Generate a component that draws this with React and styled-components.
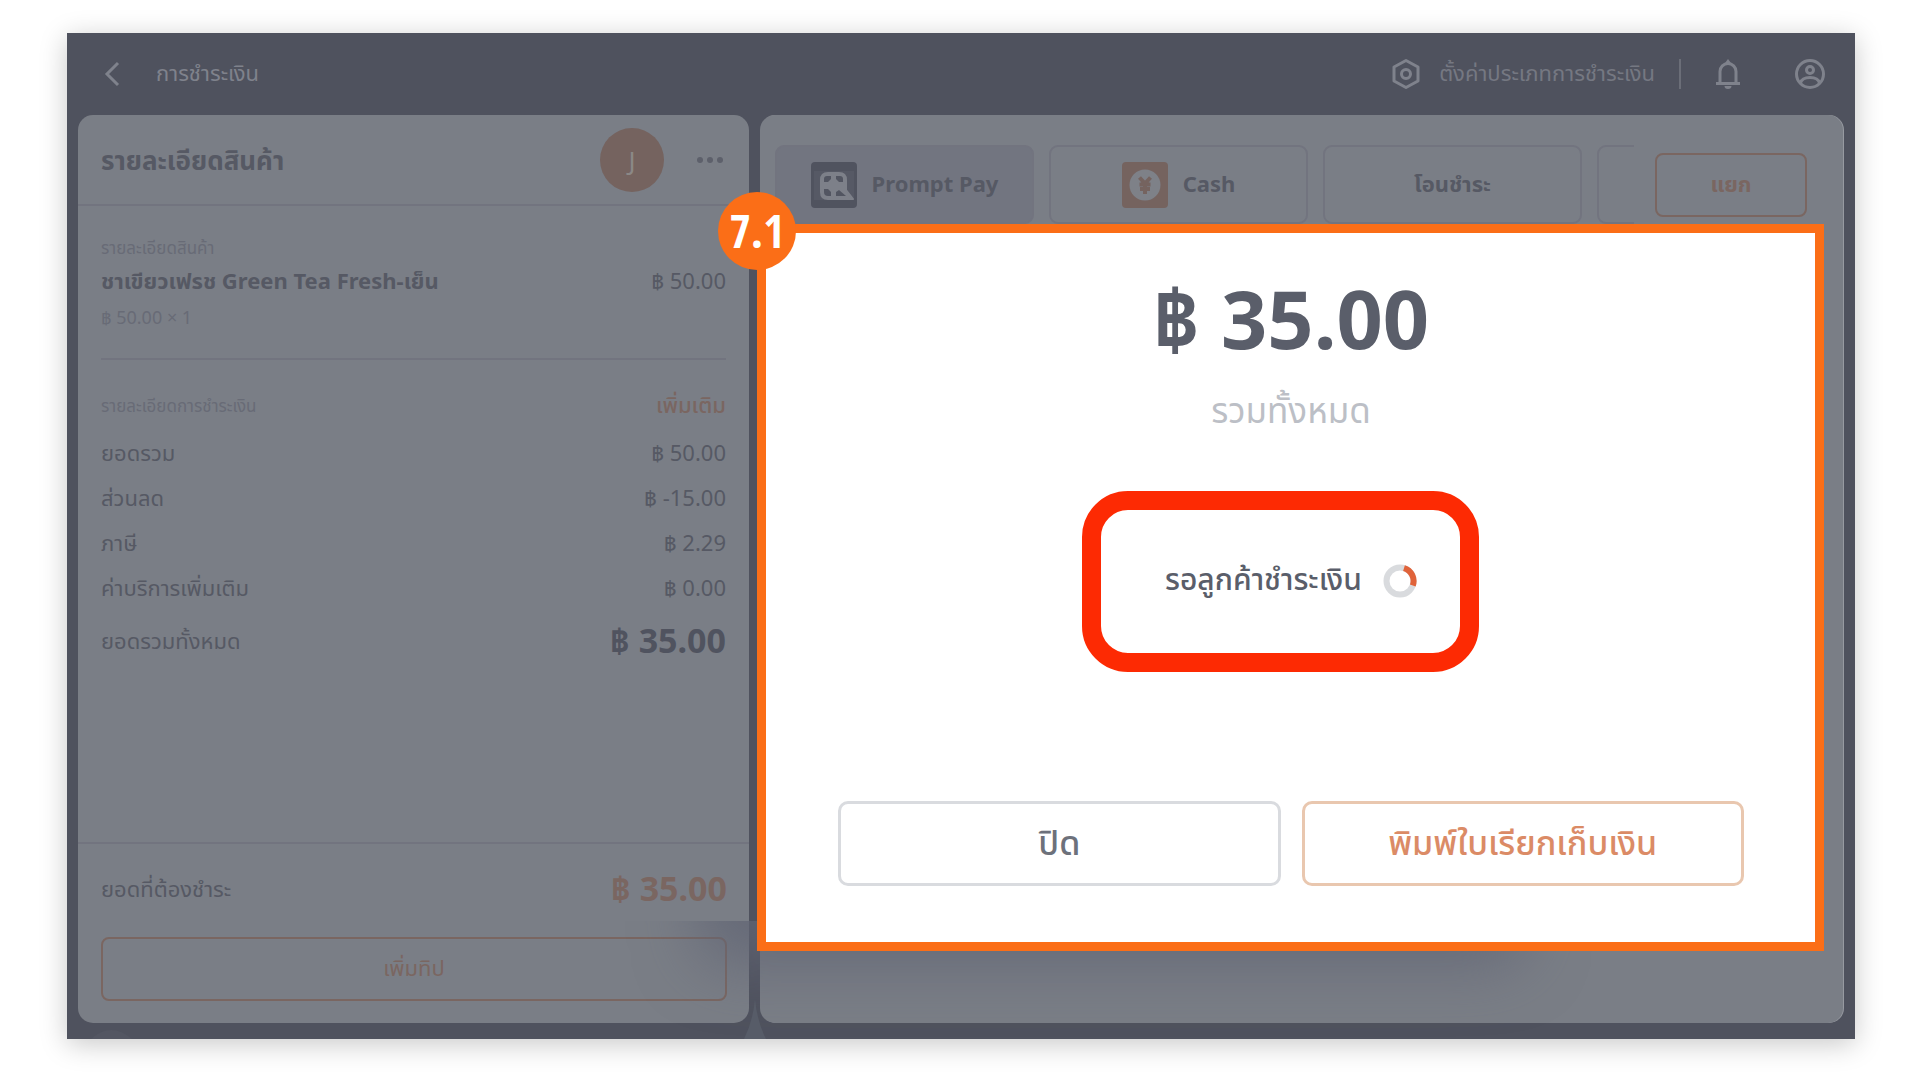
import styled, { createGlobalStyle } from "styled-components";

const GlobalStyle = createGlobalStyle`
  :root {
    --bar-color: #4f525e;
    --panel-color: #7a7e86;
    --line-color: #72747f;
    --text-color: #565964;
    --sub-text-color: #686b76;
    --muted-orange: #7a6661;
    --point-color: #fb6e17;
    --mark-color: #fd2a03;
  }
  * {
    box-sizing: border-box;
  }
  body {
    margin: 0;
    background-color: #fff;
    font-family: "Noto Sans", "Noto Sans Thai", "Noto Sans Thai UI", sans-serif;
    font-size: 22px;
    line-height: 32px;
    color: var(--text-color);
  }
  button {
    font: inherit;
    color: inherit;
    background: none;
    border: none;
    margin: 0;
    padding: 0;
    cursor: pointer;
  }
  h1, h2, h3, p, dl, dd, dt {
    margin: 0;
    font-size: inherit;
    font-weight: inherit;
  }
`;

const Page = styled.div`
  display: flex;
  min-height: 100vh;
  padding: 33px 65px 41px 67px;
`;
const Frame = styled.div`
  flex: 1;
  display: flex;
  flex-direction: column;
  min-width: 0;
  background-color: var(--bar-color);
  box-shadow: 0 5px 26px rgba(0, 0, 0, 0.22);
`;
// 태국어 글꼴은 아래 여백이 있어야 가운데로 보임
const Label = styled.span`
  display: block;
  padding-bottom: 4px;
`;

const TopBar = styled.header`
  display: flex;
  align-items: center;
  height: 82px;
  padding: 0 29px 0 36px;
  color: #7f828c;
  > h1 {
    margin-left: 35px;
    font-size: 22px;
  }
`;
const IconButton = styled.button`
  display: flex;
  align-items: center;
  > svg {
    display: block;
  }
`;
const TopActions = styled.div`
  display: flex;
  align-items: center;
  margin-left: auto;
`;
const SettingButton = styled(IconButton)`
  gap: 18px;
  padding-right: 24px;
  margin-right: 34px;
  border-right: 2px solid #6b6e78;
  height: 30px;
  > span {
    color: #757882;
  }
`;
const BellButton = styled(IconButton)`
  margin-right: 53px;
`;

const Body = styled.main`
  position: relative;
  flex: 1;
  display: flex;
  gap: 11px;
  padding: 0 12px 16px 11px;
`;
const Panel = styled.section`
  position: relative;
  display: flex;
  flex-direction: column;
  flex: ${(props) => props.$grow} 1 0;
  min-width: 0;
  border-radius: 15px;
  background-color: var(--panel-color);
`;
const MethodPanel = styled(Panel)`
  box-shadow: 1px 0 0 #979aa1;
`;

const OrderHead = styled.div`
  display: flex;
  align-items: center;
  height: 91px;
  padding: 0 26px 0 23px;
  border-bottom: 2px solid var(--line-color);
  > h2 {
    flex: 1;
    font-size: 26px;
    font-weight: 700;
  }
`;
const Avatar = styled.span`
  display: flex;
  align-items: center;
  justify-content: center;
  width: 64px;
  height: 64px;
  margin-right: 33px;
  border-radius: 50%;
  font-size: 26px;
  color: #8b8886;
  background-color: #75635f;
`;
const OrderBody = styled.div`
  flex: 1;
  padding: 26px 23px 0;
`;
const Caption = styled.p`
  font-size: ${(props) => (props.$large ? 18 : 17)}px;
  line-height: 32px;
  color: var(--sub-text-color);
`;
const Row = styled.div`
  display: flex;
  align-items: center;
  justify-content: space-between;
  height: ${(props) => props.$height || 45}px;
`;
const ItemName = styled.h3`
  font-weight: 700;
`;
const Item = styled.div`
  padding-bottom: 20px;
  margin-bottom: 30px;
  border-bottom: 2px solid var(--line-color);
`;
const MoreButton = styled.button`
  font-weight: 500;
  color: var(--muted-orange);
`;
const SummaryList = styled.dl`
  padding-top: 7px;
`;
const Total = styled.dd`
  font-size: 34px;
  font-weight: 700;
  color: ${(props) => (props.$orange ? "var(--muted-orange)" : "#50535f")};
`;
const OrderFoot = styled.div`
  padding: 18px 22px 22px 23px;
  border-top: 2px solid var(--line-color);
`;
const OutlineButton = styled.button`
  border: 2px solid var(--muted-orange);
  border-radius: 8px;
  height: 64px;
  color: var(--muted-orange);
  font-weight: ${(props) => (props.$bold ? 700 : 400)};
  width: ${(props) => props.$width || "100%"};
`;
const TipButton = styled(OutlineButton)`
  margin-top: 23px;
`;

const MethodBar = styled.div`
  display: flex;
  align-items: center;
  gap: 21px;
  padding: 30px 36px 0 15px;
`;
const MethodList = styled.div`
  flex: 1;
  min-width: 0;
  display: flex;
  gap: 15px;
  overflow: hidden;
`;
const Method = styled.button`
  flex: 0 0 259px;
  display: flex;
  align-items: center;
  justify-content: center;
  gap: 15px;
  height: 79px;
  border: 2px solid var(--line-color);
  border-radius: 9px;
  font-weight: 700;
  background-color: ${(props) => (props.$active ? "#727580" : "transparent")};
`;

// 결제 팝업 아래로 번지는 그림자
const ShadowArea = styled.div`
  position: absolute;
  left: 480px;
  right: 180px;
  bottom: 0;
  height: 118px;
  overflow: hidden;
  pointer-events: none;
  &::before {
    content: "";
    position: absolute;
    left: 160px;
    right: 160px;
    bottom: 118px;
    height: 200px;
    border-radius: 20px;
    box-shadow: 0 34px 60px 10px rgba(98, 101, 116, 0.8);
  }
`;
const BottomMarks = styled.svg`
  position: absolute;
  left: 0;
  bottom: 0;
  pointer-events: none;
`;

const Modal = styled.section`
  position: absolute;
  z-index: 1;
  top: 109px;
  right: 19px;
  bottom: 72px;
  left: -3px;
  display: flex;
  flex-direction: column;
  align-items: center;
  padding: 30px 71px 56px 72px;
  border: 9px solid var(--point-color);
  background-color: #fff;
  color: #5a5e6a;
`;
const Step = styled.span`
  position: absolute;
  top: -41px;
  left: -48px;
  display: flex;
  align-items: center;
  justify-content: center;
  width: 78px;
  height: 78px;
  padding-bottom: 3px;
  border-radius: 50%;
  font-family: "Noto Sans Condensed", "Open Sans Condensed", "Roboto Condensed",
    Roboto, sans-serif;
  font-size: 46px;
  font-weight: 900;
  color: #fff;
  background-color: var(--point-color);
`;
const Amount = styled.p`
  font-size: 81px;
  line-height: 110px;
  font-weight: 700;
`;
const AmountLabel = styled.p`
  margin-top: 12px;
  font-size: 35px;
  line-height: 50px;
  color: #bcbfc6;
`;
const Waiting = styled.div`
  position: relative;
  display: flex;
  align-items: center;
  gap: 21px;
  margin-top: 123px;
  font-size: 30px;
  line-height: 42px;
  font-weight: 500;
`;
const WaitingMark = styled.span`
  position: absolute;
  top: -67px;
  right: -62px;
  bottom: -68px;
  left: -83px;
  border: 19px solid var(--mark-color);
  border-radius: 46px;
`;
const ModalButtons = styled.div`
  display: grid;
  grid-template-columns: 1fr 1fr;
  gap: 21px;
  width: 100%;
  margin-top: auto;
`;
const ModalButton = styled.button`
  height: 85px;
  border: 3px solid ${(props) => (props.$primary ? "#e9c7af" : "#d9dbdf")};
  border-radius: 10px;
  font-size: 34px;
  font-weight: 500;
  color: ${(props) => (props.$primary ? "#db8b66" : "#6d717b")};
`;

const BackIcon = () => (
  <svg width="18" height="26" viewBox="0 0 18 26" fill="none">
    <path d="M15 2 4 13l11 11" stroke="currentColor" strokeWidth="3" />
  </svg>
);
const HexIcon = () => (
  <svg width="30" height="32" viewBox="0 0 30 32" fill="none">
    <path
      d="M15 2.5 27 9v14l-12 6.5L3 23V9Z"
      stroke="currentColor"
      strokeWidth="3"
      strokeLinejoin="round"
    />
    <circle cx="15" cy="16" r="4.5" stroke="currentColor" strokeWidth="3" />
  </svg>
);
const BellIcon = () => (
  <svg width="26" height="32" viewBox="0 0 26 32" fill="none">
    <path
      d="M5 25V13.5a8 8 0 0 1 16 0V25"
      stroke="currentColor"
      strokeWidth="3"
    />
    <path d="M1 25.5h24" stroke="currentColor" strokeWidth="3" />
    <path d="M13 1l3 4h-6ZM9.5 28h7a3.5 3 0 0 1-7 0Z" fill="currentColor" />
  </svg>
);
const UserIcon = () => (
  <svg width="32" height="32" viewBox="0 0 32 32" fill="none">
    <g stroke="currentColor" strokeWidth="3">
      <circle cx="16" cy="16" r="13.5" />
      <circle cx="16" cy="12" r="3.5" />
      <path d="M6.5 25c1-4 5.5-5.5 9.5-5.5s8.5 1.5 9.5 5.5" />
    </g>
  </svg>
);
const DotsIcon = () => (
  <svg width="26" height="8" viewBox="0 0 26 8" fill="#5d606b">
    <circle cx="3" cy="4" r="3" />
    <circle cx="13" cy="4" r="3" />
    <circle cx="23" cy="4" r="3" />
  </svg>
);
const PromptPayIcon = () => (
  <svg width="46" height="46" viewBox="0 0 46 46">
    <rect width="46" height="46" rx="4" fill="#50535f" />
    <rect x="3" y="9" width="40" height="29" fill="#565965" />
    <path
      d="M17 11h11q7 0 7 7v10l7 9H17q-7 0-7-7V18q0-7 7-7Z"
      fill="#7d8089"
      stroke="#7d8089"
      strokeWidth="2"
      strokeLinejoin="round"
    />
    <g fill="#525561">
      <path d="M13 20v-3q0-3 3-3h4v3l-3 3Z" />
      <path d="M32 20v-3q0-3-3-3h-4v3l3 3Z" />
      <path d="M13 27v3q0 4 4 4h3v-4l-3-3Z" />
      <path d="M25 34v-4l3-2 7 6Z" />
    </g>
  </svg>
);
const CashIcon = () => (
  <svg width="46" height="46" viewBox="0 0 46 46">
    <rect width="46" height="46" rx="4" fill="#75635f" />
    <circle cx="23" cy="23" r="15.5" fill="#7e8188" />
    <path
      d="m17.5 15.5 5.5 6 5.5-6M23 21v11M17.500 22.500h11M18 27h10"
      fill="none"
      stroke="#75635f"
      strokeWidth="4"
    />
  </svg>
);
const Spinner = () => (
  <svg width="34" height="34" viewBox="0 0 34 34" fill="none" strokeWidth="6">
    <circle cx="17" cy="17" r="13.5" stroke="#d9dbde" />
    <path d="M21 4.1A13.5 13.5 0 0 1 29.8 21.5" stroke="#e0633a" />
  </svg>
);

const summary = [
  { label: "ยอดรวม", value: "฿ 50.00" },
  { label: "ส่วนลด", value: "฿ -15.00" },
  { label: "ภาษี", value: "฿ 2.29" },
  { label: "ค่าบริการเพิ่มเติม", value: "฿ 0.00" },
];

const OrderPanel = () => (
  <Panel $grow={671}>
    <OrderHead>
      <h2>รายละเอียดสินค้า</h2>
      <Avatar>J</Avatar>
      <IconButton type="button" aria-label="เมนู">
        <DotsIcon />
      </IconButton>
    </OrderHead>
    <OrderBody>
      <Item>
        <Caption>รายละเอียดสินค้า</Caption>
        <Row $height={32}>
          <ItemName>ชาเขียวเฟรช Green Tea Fresh-เย็น</ItemName>
          <span>฿ 50.00</span>
        </Row>
        <Row $height={42}>
          <Caption $large>฿ 50.00 × 1</Caption>
        </Row>
      </Item>
      <Row $height={32}>
        <Caption>รายละเอียดการชำระเงิน</Caption>
        <MoreButton type="button">
          <Label>เพิ่มเติม</Label>
        </MoreButton>
      </Row>
      <SummaryList>
        {summary.map((row) => (
          <Row key={row.label}>
            <dt>{row.label}</dt>
            <dd>{row.value}</dd>
          </Row>
        ))}
        <Row $height={62}>
          <dt>ยอดรวมทั้งหมด</dt>
          <Total>฿ 35.00</Total>
        </Row>
      </SummaryList>
    </OrderBody>
    <OrderFoot>
      <dl>
        <Row $height={52}>
          <dt>ยอดที่ต้องชำระ</dt>
          <Total $orange>฿ 35.00</Total>
        </Row>
      </dl>
      <TipButton type="button">
        <Label>เพิ่มทิป</Label>
      </TipButton>
    </OrderFoot>
  </Panel>
);

const PaymentModal = () => (
  <Modal role="dialog">
    <Step>7.1</Step>
    <Amount>฿ 35.00</Amount>
    <AmountLabel>รวมทั้งหมด</AmountLabel>
    <Waiting>
      <Label>รอลูกค้าชำระเงิน</Label>
      <Spinner />
      <WaitingMark />
    </Waiting>
    <ModalButtons>
      <ModalButton type="button">
        <Label>ปิด</Label>
      </ModalButton>
      <ModalButton type="button" $primary>
        <Label>พิมพ์ใบเรียกเก็บเงิน</Label>
      </ModalButton>
    </ModalButtons>
  </Modal>
);

const App = () => {
  return (
    <>
      <GlobalStyle />
      <Page>
        <Frame>
          <TopBar>
            <IconButton type="button" aria-label="กลับ">
              <BackIcon />
            </IconButton>
            <h1>
              <Label>การชำระเงิน</Label>
            </h1>
            <TopActions>
              <SettingButton type="button">
                <HexIcon />
                <Label>ตั้งค่าประเภทการชำระเงิน</Label>
              </SettingButton>
              <BellButton type="button" aria-label="แจ้งเตือน">
                <BellIcon />
              </BellButton>
              <IconButton type="button" aria-label="บัญชี">
                <UserIcon />
              </IconButton>
            </TopActions>
          </TopBar>
          <Body>
            <OrderPanel />
            <MethodPanel $grow={1083}>
              <MethodBar>
                <MethodList>
                  <Method type="button" $active>
                    <PromptPayIcon />
                    <Label>Prompt Pay</Label>
                  </Method>
                  <Method type="button">
                    <CashIcon />
                    <Label>Cash</Label>
                  </Method>
                  <Method type="button">
                    <Label>โอนชำระ</Label>
                  </Method>
                  <Method type="button" aria-label="อื่นๆ" />
                </MethodList>
                <OutlineButton type="button" $bold $width="152px">
                  <Label>แยก</Label>
                </OutlineButton>
              </MethodBar>
              <PaymentModal />
            </MethodPanel>
            <ShadowArea />
            <BottomMarks width="720" height="40" viewBox="0 0 720 40" fill="#575c68">
              <path d="M688 0 Q686 22 677 40H699Q690 22 688 0Z" />
              <path d="M24 40Q44 22 65 40Z" fill="#535662" />
            </BottomMarks>
          </Body>
        </Frame>
      </Page>
    </>
  );
};

export default App;
